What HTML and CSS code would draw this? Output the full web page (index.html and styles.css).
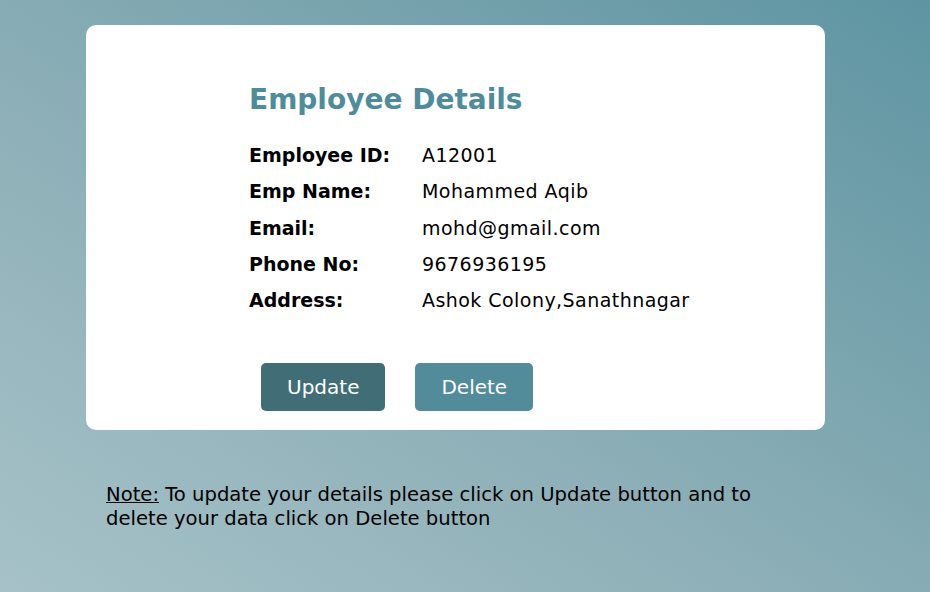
FILE: index.html
```html
<!DOCTYPE html>
<html lang="en">
<head>
<meta charset="utf-8">
<title>Employee Details</title>
<link rel="stylesheet" href="styles.css">
</head>
<body>
<main class="page">
  <section class="card">
    <h2 class="title">Employee Details</h2>
    <div class="details">
      <div class="label">Employee ID:</div><div class="value">A12001</div>
      <div class="label">Emp Name:</div><div class="value">Mohammed Aqib</div>
      <div class="label">Email:</div><div class="value">mohd@gmail.com</div>
      <div class="label">Phone No:</div><div class="value">9676936195</div>
      <div class="label">Address:</div><div class="value">Ashok Colony,Sanathnagar</div>
    </div>
    <div class="actions">
      <button class="btn btn-update" type="button">Update</button>
      <button class="btn btn-delete" type="button">Delete</button>
    </div>
  </section>
  <p class="note"><u>Note:</u> To update your details please click on Update button and to delete your data click on Delete button</p>
</main>
</body>
</html>
```
FILE: styles.css
```css
html, body {
  margin: 0;
  height: 100%;
}
body {
  font-family: "DejaVu Sans", "Noto Sans", sans-serif;
  background: linear-gradient(to top right, #a6c2c8 0%, #8fb0b8 40%, #5e95a2 100%);
  color: #000;
}
.page {
  padding: 25px 0 0 86px;
}
.card {
  box-sizing: border-box;
  width: 739px;
  height: 405px;
  background: #fff;
  border-radius: 10px;
  padding: 58px 0 0 163px;
}
.title {
  margin: 0;
  font-size: 28px;
  line-height: 34px;
  font-weight: 700;
  color: #4f8c9b;
}
.details {
  margin-top: 20px;
  display: grid;
  grid-template-columns: 173px auto;
  grid-auto-rows: 36.3px;
  align-items: center;
  font-size: 19px;
}
.label {
  font-weight: 700;
}
.value {
  letter-spacing: 0.45px;
}
.actions {
  display: flex;
  gap: 30px;
  margin: 45px 0 0 12px;
}
.btn {
  font-family: inherit;
  font-size: 20px;
  color: #fff;
  border: none;
  border-radius: 5px;
  height: 48px;
  padding: 0 26px;
}
.btn-update {
  background: #416e76;
}
.btn-delete {
  background: #528b9a;
}
.note {
  margin: 53px 0 0 20px;
  width: 680px;
  font-size: 19.6px;
  line-height: 24px;
}
```
